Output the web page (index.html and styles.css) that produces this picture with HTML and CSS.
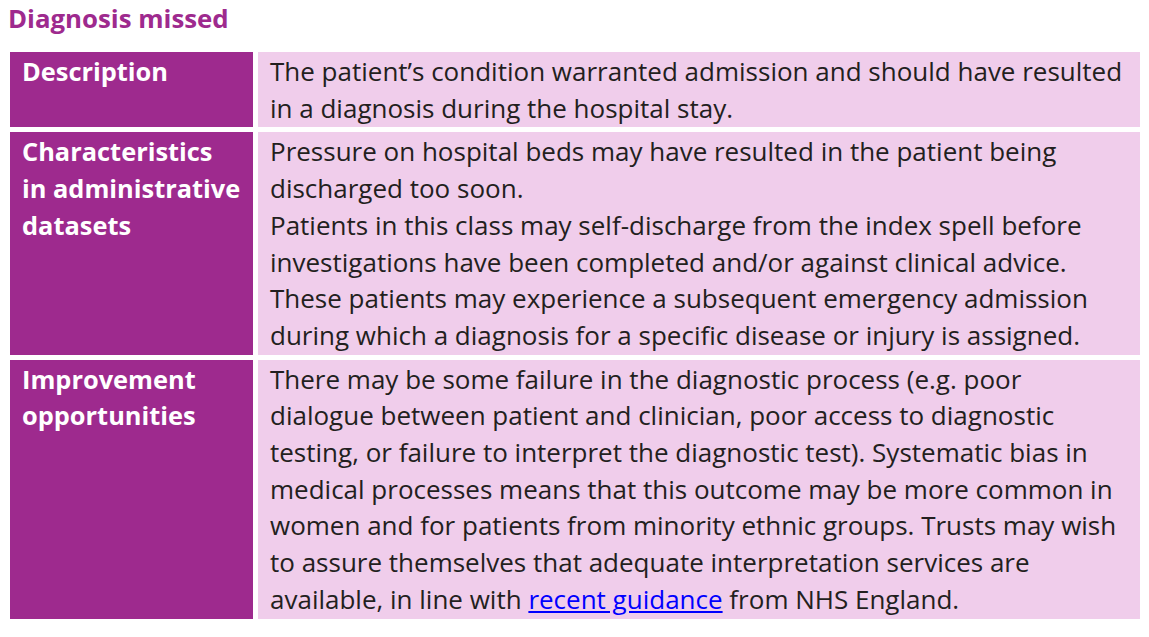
FILE: index.html
```html
<!DOCTYPE html>
<html lang="en">
<head>
<meta charset="utf-8">
<title>Diagnosis missed</title>
<link rel="stylesheet" href="styles.css">
</head>
<body>
<h2 class="title">Diagnosis missed</h2>
<div class="table">
  <div class="label">Description</div>
  <div class="cell">The patient’s condition warranted admission and should have resulted in a diagnosis during the hospital stay.</div>
  <div class="label">Characteristics in&nbsp;administrative datasets</div>
  <div class="cell">
    <p>Pressure on hospital beds may have resulted in the patient being discharged too soon.</p>
    <p>Patients in this class may self-discharge from the index spell before investigations have been completed and/or against clinical advice.</p>
    <p>These patients may experience a subsequent emergency admission during which a diagnosis for a specific disease or injury is assigned.</p>
  </div>
  <div class="label">Improvement opportunities</div>
  <div class="cell">There may be some failure in the diagnostic process (e.g. poor dialogue between patient and clinician, poor access to diagnostic testing, or failure to interpret the diagnostic test). Systematic bias in medical processes means that this outcome may be more common in women and for patients from minority ethnic groups. Trusts may wish to assure themselves that adequate interpretation services are available, in line with <a href="#" class="link">recent guidance</a> from NHS England.</div>
</div>
</body>
</html>
```
FILE: styles.css
```css
html, body {
  margin: 0;
  padding: 0;
  background: #ffffff;
}
body {
  font-family: "Open Sans", "Noto Sans", "DejaVu Sans", sans-serif;
  color: #231f20;
  padding: 0 9px 0 10px;
}
.title {
  margin: 0 0 0 -2px;
  padding: 0;
  font-size: 25.8px;
  line-height: 36px;
  font-weight: 700;
  color: #9e2a8e;
  height: 52px;
  box-sizing: border-box;
}
.table {
  display: grid;
  grid-template-columns: 243px 882px;
  column-gap: 5px;
  row-gap: 5px;
}
.label {
  background: #9e2a8e;
  color: #ffffff;
  font-weight: 700;
  font-size: 25.4px;
  line-height: 36.7px;
  padding: 1px 2px 1px 12px;
}
.cell {
  background: #f0cdeb;
  font-size: 26px;
  line-height: 36.7px;
  padding: 1px 12px 1px 12px;
}
.cell p {
  margin: 0;
}
.link {
  color: #0000ff;
  text-decoration: underline;
}
```
